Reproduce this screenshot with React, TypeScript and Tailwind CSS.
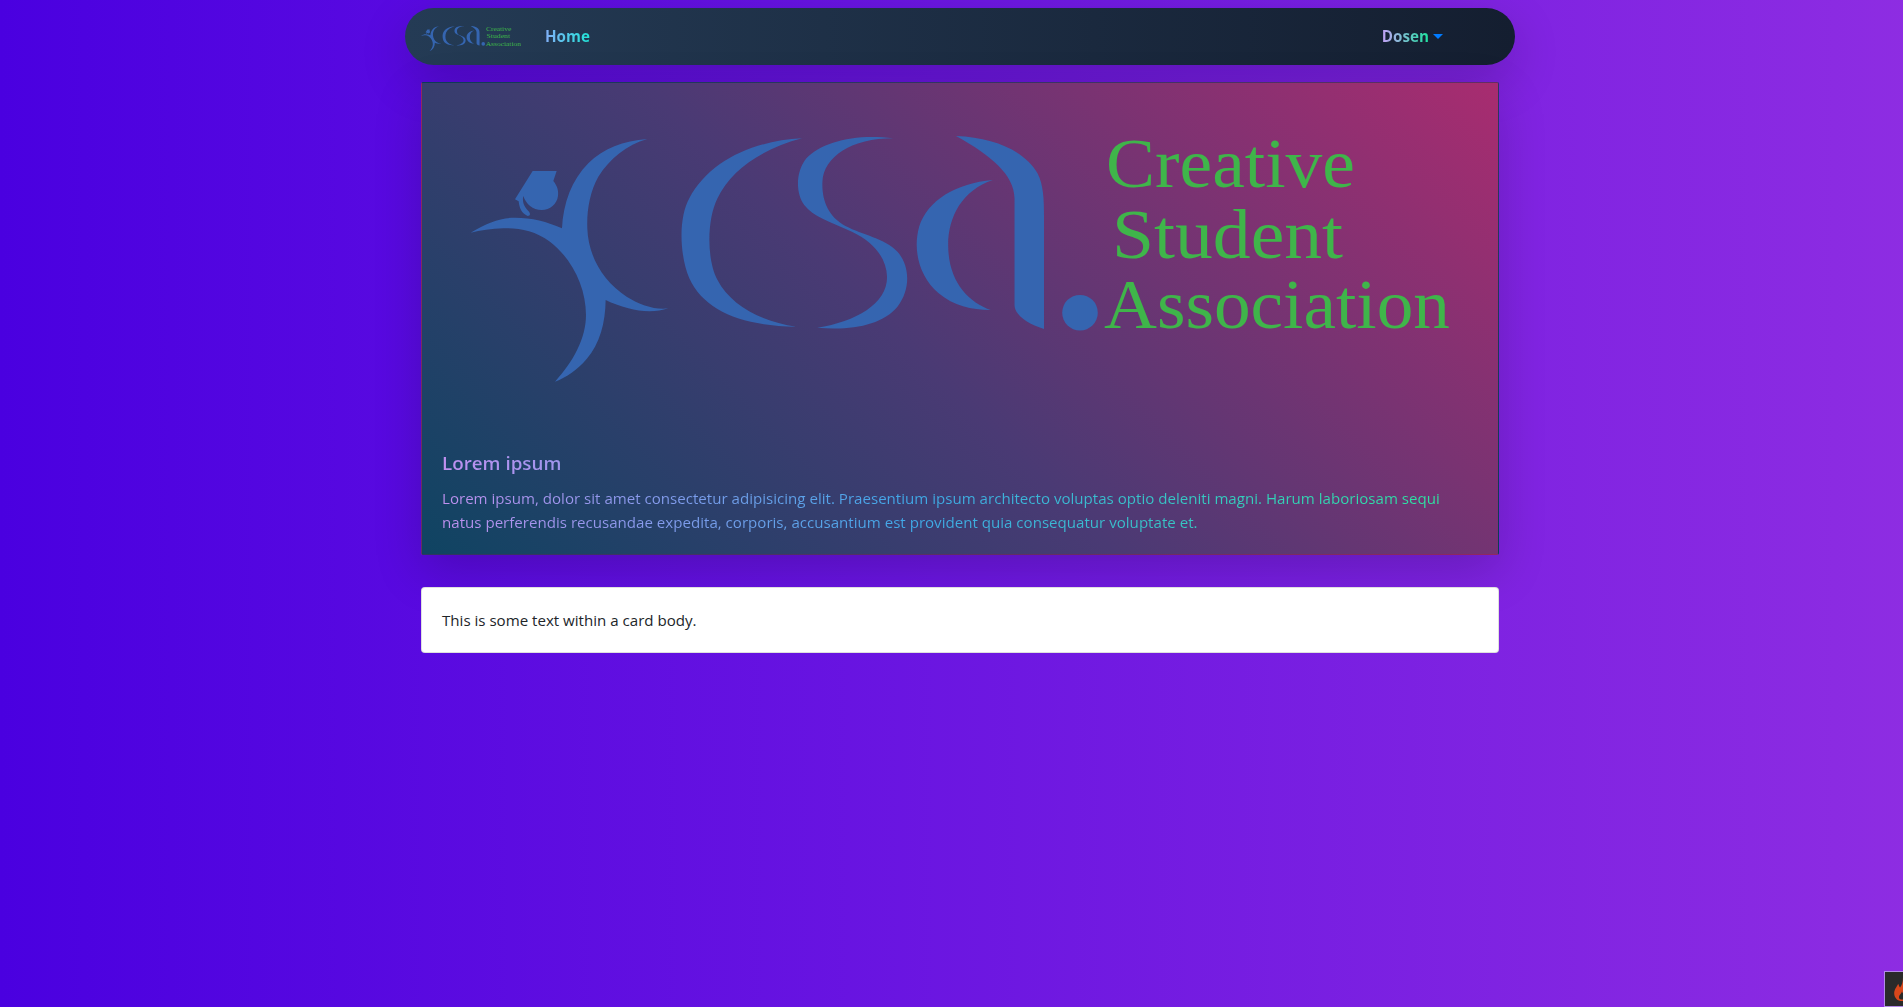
import React from 'react';

const sans = { fontFamily: '"Open Sans", "Noto Sans", sans-serif' };

// CSA logo, drawn in the coordinates of the full page so both uses share one set of paths
const CsaLogo: React.FC<{ viewBox: string; className: string }> = ({ viewBox, className }) => (
  <svg viewBox={viewBox} className={className} preserveAspectRatio="none">
    <g fill="#3565b0">
      {/* student figure */}
      <g transform="translate(460 160) scale(0.3333)">
        <path d="M32 218 C80 188 125 173 165 173 C215 173 262 185 306 205 C310 130 335 60 385 10 C430 -35 490 -58 562 -63 C500 -45 450 -5 415 50 C390 95 380 150 382 205 C385 290 430 365 500 410 C540 435 585 450 625 445 C590 457 545 456 505 445 C480 438 458 430 437 420 C436 490 420 550 380 597 C352 630 320 652 285 665 C340 605 378 535 378 465 C378 380 335 295 270 245 C225 212 175 203 130 205 C95 206 60 211 32 218 Z" />
        <path d="M218 33 L290 33 L280 63 C292 78 296 92 294 108 C291 132 270 150 245 150 C218 150 198 132 190 108 C186 125 192 140 205 153 C212 160 212 167 203 168 C185 160 178 145 176 124 L165 118 Z" />
      </g>
      {/* letters c, s, a */}
      <g transform="translate(440 120) scale(0.4336 0.3333)">
        <path d="M835 55 C720 62 620 125 575 235 C551 290 551 400 575 475 C610 575 700 618 822 620 C740 605 670 555 640 480 C615 420 615 300 640 235 C670 150 745 85 835 55 Z" />
        <path d="M1045 55 C960 40 880 65 845 115 C820 155 820 220 840 255 C860 290 900 305 950 335 C1000 365 1030 415 1031 470 C1032 550 960 605 870 623 C950 632 1020 615 1055 560 C1085 510 1085 440 1055 395 C1025 355 975 345 935 318 C895 290 880 240 882 185 C885 110 950 55 1045 55 Z" />
        <path d="M1275 180 C1190 190 1125 240 1105 320 C1090 390 1105 470 1150 520 C1185 558 1225 570 1270 570 C1215 545 1172 480 1172 375 C1172 290 1205 210 1275 180 Z" />
        <path d="M1190 48 C1280 52 1350 95 1378 160 C1392 195 1393 240 1393 290 L1393 627 C1355 612 1325 585 1325 555 L1325 235 C1325 165 1270 105 1190 48 Z" />
      </g>
      <circle cx="1080" cy="312.7" r="17.8" />
    </g>
    <g fill="#3fb54a" fontSize="70" style={{ fontFamily: '"Liberation Serif", serif' }}>
      <text x="1106" y="186.7" textLength="249" lengthAdjust="spacingAndGlyphs">Creative</text>
      <text x="1112" y="257.7" textLength="231" lengthAdjust="spacingAndGlyphs">Student</text>
      <text x="1104" y="328.3" textLength="346" lengthAdjust="spacingAndGlyphs">Association</text>
    </g>
  </svg>
);

const App: React.FC = () => {
  return (
    <div className="h-screen w-full overflow-hidden" style={sans}>
      {/* the source page is 1920 wide, the window cuts off its right edge */}
      <div className="relative h-full w-[1920px] bg-[linear-gradient(to_right,#4a00e0,#8e2de2)]">
        <div className="mx-auto w-[1110px] pt-2">
          {/* Navbar */}
          <nav className="flex h-[57px] items-center rounded-[30px] bg-[linear-gradient(to_right,#243b55,#141e30)] pl-[16px] pr-[72px] shadow-[0_16px_48px_rgba(0,0,0,0.175)]">
            <CsaLogo viewBox="470 137 980 245" className="mt-[4px] h-[25px] w-[100px]" />
            <a className="ml-[24px] bg-[linear-gradient(to_right,#82aff8,#20e4d8)] bg-clip-text text-[15.2px] font-bold text-transparent">Home</a>
            <div className="ml-auto flex items-center">
              <a className="bg-[linear-gradient(to_right,#c3a0f5,#1de4a0)] bg-clip-text text-[15.2px] font-bold text-transparent">Dosen</a>
              <span className="ml-[4px] h-0 w-0 border-x-[5px] border-t-[5px] border-x-transparent border-t-[#007bff]" />
            </div>
          </nav>

          <div className="mx-auto mt-[17px] w-[1078px]">
            {/* Hero card */}
            <div className="relative h-[473px] overflow-hidden rounded-[2px] border border-[rgba(0,0,0,0.125)] bg-[linear-gradient(45deg,#0f4462,#4a3a74_45%,#a82c70)] shadow-[0_16px_48px_rgba(0,0,0,0.175)]">
              <CsaLogo viewBox="422 83 1076 471" className="block h-full w-full" />
              <div className="absolute bottom-[20px] left-[20px] right-[20px]">
                <div className="bg-[linear-gradient(to_right,#c090f0,#40a8e8_45%,#2ce89c)] bg-clip-text text-transparent">
                  <h5 className="mb-[11px] text-[18.8px] font-semibold leading-[24px]">Lorem ipsum</h5>
                  <p className="text-[15.1px] leading-[24px]">
                    Lorem ipsum, dolor sit amet consectetur adipisicing elit. Praesentium ipsum architecto voluptas optio deleniti magni. Harum laboriosam sequi
                    <br />
                    natus perferendis recusandae expedita, corporis, accusantium est provident quia consequatur voluptate et.
                  </p>
                </div>
              </div>
            </div>

            {/* Plain card */}
            <div className="relative mt-[32px] rounded-[4px] border border-[rgba(0,0,0,0.125)] bg-white px-5 py-[20px] text-[15.1px] leading-[24px] text-[#212529]">
              This is some text within a card body.
            </div>
          </div>
        </div>

        {/* floating widget at the corner */}
        <div className="absolute bottom-0 right-0 flex h-9 w-9 items-center justify-center border border-[#b38ae8] bg-[#2a2a2a]">
          <svg viewBox="0 0 18 24" className="h-[23px] w-[18px]">
            <path fill="#d9471b" d="M10 0 C11 5 16 8 17 14 C18 20 13 24 9 24 C4 24 0 20 1 14 C2 10 4 9 5 6 C6 8 6 9 7 10 C9 7 10 4 10 0 Z" />
            <path fill="#2a2a2a" d="M9 14 C10 17 13 18 12 21 C11 23 7 23 6 21 C5 18 8 17 9 14 Z" />
          </svg>
        </div>
      </div>
    </div>
  );
};

export default App;
